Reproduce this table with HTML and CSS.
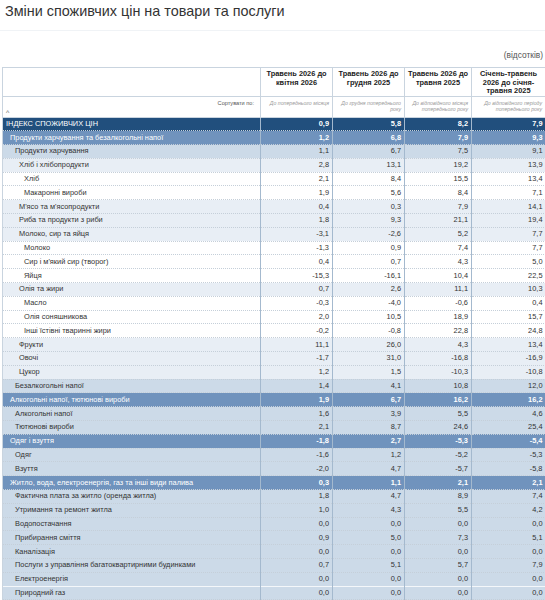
FILE: index.html
```html
<!DOCTYPE html>
<html lang="uk">
<head>
    <meta charset="UTF-8">
    <meta name="viewport" content="width=device-width, initial-scale=1.0">
    <title>Зміни споживчих цін</title>
    <link rel="stylesheet" href="styles.css">
</head>
<body>
    <h1 class="page-title">Зміни споживчих цін на товари та послуги</h1>
    <div class="units">(відсотків)</div>

    <table class="cpi-table">
        <colgroup>
            <col class="col-name">
            <col class="col-a">
            <col class="col-b">
            <col class="col-c">
            <col class="col-d">
        </colgroup>
        <thead>
            <tr class="head-row">
                <th></th>
                <th>Травень 2026 до квітня 2026</th>
                <th>Травень 2026 до грудня 2025</th>
                <th>Травень 2026 до травня 2025</th>
                <th>Січень-травень 2026 до січня-травня 2025</th>
            </tr>
            <tr class="sort-row">
                <td class="sort-label">Сортувати по:<span class="sort-caret">^</span></td>
                <td>До попереднього місяця</td>
                <td>До грудня попереднього року</td>
                <td>До відповідного місяця попереднього року</td>
                <td>До відповідного періоду попереднього року</td>
            </tr>
        </thead>
        <tbody>
            <tr class="lvl0"><td>ІНДЕКС СПОЖИВЧИХ ЦІН</td><td>0,9</td><td>5,8</td><td>8,2</td><td>7,9</td></tr>
            <tr class="lvl1"><td>Продукти харчування та безалкогольні напої</td><td>1,2</td><td>6,8</td><td>7,9</td><td>9,3</td></tr>
            <tr class="lvl2"><td>Продукти харчування</td><td>1,1</td><td>6,7</td><td>7,5</td><td>9,1</td></tr>
            <tr class="lvl3"><td>Хліб і хлібопродукти</td><td>2,8</td><td>13,1</td><td>19,2</td><td>13,9</td></tr>
            <tr class="lvl4"><td>Хліб</td><td>2,1</td><td>8,4</td><td>15,5</td><td>13,4</td></tr>
            <tr class="lvl4"><td>Макаронні вироби</td><td>1,9</td><td>5,6</td><td>8,4</td><td>7,1</td></tr>
            <tr class="lvl3"><td>М'ясо та м'ясопродукти</td><td>0,4</td><td>0,3</td><td>7,9</td><td>14,1</td></tr>
            <tr class="lvl3"><td>Риба та продукти з риби</td><td>1,8</td><td>9,3</td><td>21,1</td><td>19,4</td></tr>
            <tr class="lvl3"><td>Молоко, сир та яйця</td><td>-3,1</td><td>-2,6</td><td>5,2</td><td>7,7</td></tr>
            <tr class="lvl4"><td>Молоко</td><td>-1,3</td><td>0,9</td><td>7,4</td><td>7,7</td></tr>
            <tr class="lvl4"><td>Сир і м'який сир (творог)</td><td>0,4</td><td>0,7</td><td>4,3</td><td>5,0</td></tr>
            <tr class="lvl4"><td>Яйця</td><td>-15,3</td><td>-16,1</td><td>10,4</td><td>22,5</td></tr>
            <tr class="lvl3"><td>Олія та жири</td><td>0,7</td><td>2,6</td><td>11,1</td><td>10,3</td></tr>
            <tr class="lvl4"><td>Масло</td><td>-0,3</td><td>-4,0</td><td>-0,6</td><td>0,4</td></tr>
            <tr class="lvl4"><td>Олія соняшникова</td><td>2,0</td><td>10,5</td><td>18,9</td><td>15,7</td></tr>
            <tr class="lvl4"><td>Інші їстівні тваринні жири</td><td>-0,2</td><td>-0,8</td><td>22,8</td><td>24,8</td></tr>
            <tr class="lvl3"><td>Фрукти</td><td>11,1</td><td>26,0</td><td>4,3</td><td>13,4</td></tr>
            <tr class="lvl3"><td>Овочі</td><td>-1,7</td><td>31,0</td><td>-16,8</td><td>-16,9</td></tr>
            <tr class="lvl3"><td>Цукор</td><td>1,2</td><td>1,5</td><td>-10,3</td><td>-10,8</td></tr>
            <tr class="lvl2"><td>Безалкогольні напої</td><td>1,4</td><td>4,1</td><td>10,8</td><td>12,0</td></tr>
            <tr class="lvl1"><td>Алкогольні напої, тютюнові вироби</td><td>1,9</td><td>6,7</td><td>16,2</td><td>16,2</td></tr>
            <tr class="lvl2"><td>Алкогольні напої</td><td>1,6</td><td>3,9</td><td>5,5</td><td>4,6</td></tr>
            <tr class="lvl2"><td>Тютюнові вироби</td><td>2,1</td><td>8,7</td><td>24,6</td><td>25,4</td></tr>
            <tr class="lvl1"><td>Одяг і взуття</td><td>-1,8</td><td>2,7</td><td>-5,3</td><td>-5,4</td></tr>
            <tr class="lvl2"><td>Одяг</td><td>-1,6</td><td>1,2</td><td>-5,2</td><td>-5,3</td></tr>
            <tr class="lvl2"><td>Взуття</td><td>-2,0</td><td>4,7</td><td>-5,7</td><td>-5,8</td></tr>
            <tr class="lvl1"><td>Житло, вода, електроенергія, газ та інші види палива</td><td>0,3</td><td>1,1</td><td>2,1</td><td>2,1</td></tr>
            <tr class="lvl2"><td>Фактична плата за житло (оренда житла)</td><td>1,8</td><td>4,7</td><td>8,9</td><td>7,4</td></tr>
            <tr class="lvl2"><td>Утримання та ремонт житла</td><td>1,0</td><td>4,3</td><td>5,5</td><td>4,2</td></tr>
            <tr class="lvl2"><td>Водопостачання</td><td>0,0</td><td>0,0</td><td>0,0</td><td>0,0</td></tr>
            <tr class="lvl2"><td>Прибирання сміття</td><td>0,9</td><td>5,0</td><td>7,3</td><td>5,1</td></tr>
            <tr class="lvl2"><td>Каналізація</td><td>0,0</td><td>0,0</td><td>0,0</td><td>0,0</td></tr>
            <tr class="lvl2"><td>Послуги з управління багатоквартирними будинками</td><td>0,7</td><td>5,1</td><td>5,7</td><td>7,9</td></tr>
            <tr class="lvl2"><td>Електроенергія</td><td>0,0</td><td>0,0</td><td>0,0</td><td>0,0</td></tr>
            <tr class="lvl2 last"><td>Природний газ</td><td>0,0</td><td>0,0</td><td>0,0</td><td>0,0</td></tr>
        </tbody>
    </table>
</body>
</html>
```

FILE: styles.css
```css
* {
    margin: 0;
    padding: 0;
    box-sizing: border-box;
}

body {
    background: #fff;
    font-family: 'Liberation Sans', Arial, sans-serif;
    color: #333;
    width: 545px;
    overflow: hidden;
}

.page-title {
    font-size: 14.4px;
    font-weight: normal;
    color: #333;
    padding: 3px 0 0 5px;
    height: 31px;
    border-bottom: 1px solid #f0f3f6;
}

.units {
    text-align: right;
    font-size: 8.4px;
    color: #555;
    padding: 19px 2px 0 0;
    height: 36px;
}

.cpi-table {
    margin-left: 2px;
    width: 543px;
    border-collapse: collapse;
    table-layout: fixed;
    font-size: 7.4px;
}

.col-name { width: 258px; }
.col-a { width: 72px; }
.col-b { width: 72px; }
.col-c { width: 67px; }
.col-d { width: 74px; }

.head-row th {
    height: 27px;
    vertical-align: top;
    padding: 2px 2px 0;
    font-weight: bold;
    font-size: 7.4px;
    line-height: 8.5px;
    color: #222;
    text-align: center;
    border: 1px solid #c9d4df;
}

.sort-row td {
    height: 21px;
    vertical-align: top;
    padding: 3px 3px 0 3px;
    font-size: 5.2px;
    line-height: 6px;
    font-style: italic;
    color: #9a9a9a;
    text-align: right;
    border: 1px solid #c9d4df;
}

.sort-row .sort-label {
    position: relative;
    font-style: normal;
    font-size: 5.6px;
    color: #555;
    padding-right: 6px;
}

.sort-caret {
    position: absolute;
    left: 3px;
    bottom: 1px;
    font-size: 7px;
    color: #666;
}

tbody td {
    height: 13.8px;
    padding: 0 3px;
    line-height: 12px;
    white-space: nowrap;
    text-align: right;
    border-bottom: 1px dotted #c5cfd9;
    border-left: 1px solid #a4b9ce;
}

tbody td:first-child {
    text-align: left;
    border-left: 1px solid #c9d4df;
}

.lvl0 td {
    background: #214f7d;
    color: #fff;
    font-weight: bold;
}

.lvl0 td:first-child {
    font-weight: normal;
    padding-left: 3px;
}

.lvl1 td {
    background: #7093bd;
    color: #fff;
    font-weight: bold;
}

.lvl1 td:first-child {
    font-weight: normal;
    padding-left: 7px;
}

.lvl2 td {
    background: #ccdae8;
}

.lvl2 td:first-child {
    padding-left: 12px;
}

.lvl3 td {
    background: #e8eef5;
}

.lvl3 td:first-child {
    padding-left: 16px;
}

.lvl4 td {
    background: #fff;
}

.lvl4 td:first-child {
    padding-left: 21px;
}

.last td {
    border-top: 1px solid #f4f7fa;
}
```
